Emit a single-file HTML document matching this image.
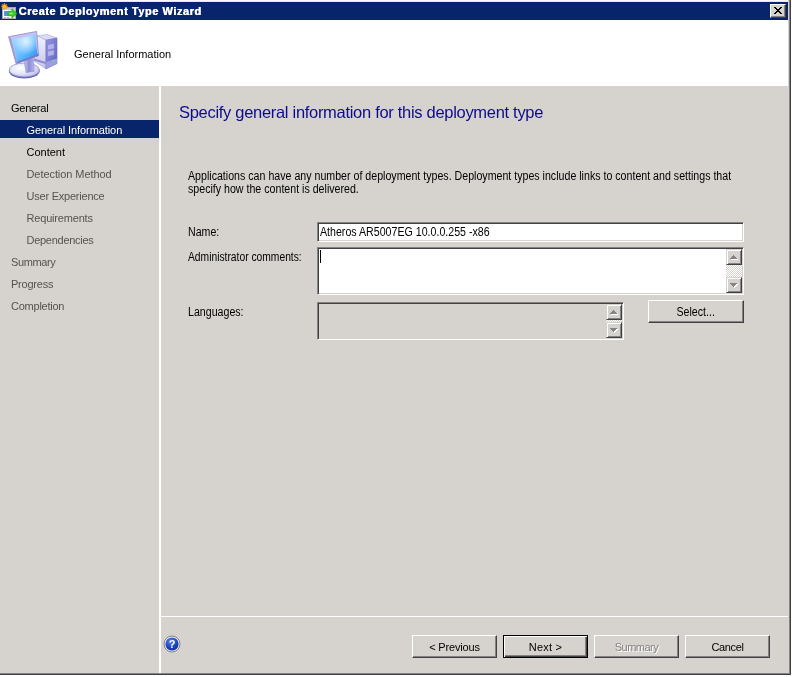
<!DOCTYPE html>
<html>
<head>
<meta charset="utf-8">
<title>Create Deployment Type Wizard</title>
<style>
*{box-sizing:border-box;margin:0;padding:0}
html,body{width:792px;height:677px;overflow:hidden;background:#fff}
body{will-change:transform;font-family:"Liberation Sans",sans-serif;font-size:11px;color:#000;position:relative}
.abs{position:absolute}
#win{left:0;top:0;width:789px;height:673px;background:#d6d3ce}
#topstrip{left:0;top:0;width:789px;height:2px;background:linear-gradient(#fcfbf8 0 1px,#ebe8e0 1px 2px)}
#title{left:0;top:2px;width:788px;height:18px;background:#08246b}
#title .t{left:18.5px;top:2px;color:#fff;font-weight:bold;font-size:11px;line-height:14px;white-space:nowrap;letter-spacing:0.55px;text-shadow:0.4px 0 0 #fff}
#close{left:770px;top:4px;width:16px;height:14px;background:#d6d3ce;border:1px solid;border-color:#fff #424142 #424142 #fff;box-shadow:inset -1px -1px 0 #848284}
#header{left:0;top:20px;width:788px;height:66px;background:#fff}
#header .t{left:74px;top:27px;font-size:11px;line-height:14px;white-space:nowrap}
#rb1{left:788px;top:0;width:1px;height:673px;background:#d6d3ce}
#rb2{left:789px;top:0;width:2px;height:675px;background:linear-gradient(90deg,#848284 0 1px,#424142 1px 2px)}
#bb{left:0;top:673px;width:790px;height:2px;background:linear-gradient(#848284 0 1px,#424142 1px 2px)}
#bbc{left:790px;top:673px;width:1px;height:2px;background:#424142}
#side{left:0;top:86px;width:159px;height:587px;background:#d6d3ce}
.nav{left:0;width:159px;height:18px;line-height:18px;font-size:11px;white-space:nowrap}
.nav.l1{padding-left:11px}
.nav.l2{padding-left:26.5px}
.nav.dis{color:#555350}
.nav.sel{background:#08246b;color:#fff;line-height:20px}
#vline{left:159px;top:86px;width:2px;height:587px;background:#fff}
#hline{left:161px;top:616px;width:627px;height:1px;background:#fff}
#h1{left:179px;top:102px;font-size:16.5px;line-height:20px;color:#0c0c8c;white-space:nowrap;letter-spacing:-0.3px}
.ms{font-size:12px;line-height:14px;white-space:nowrap;transform:scaleX(.886);transform-origin:0 0}
.sunken{border:1px solid;border-color:#848284 #fff #fff #848284;box-shadow:inset 1px 1px 0 #424142,inset -1px -1px 0 #d6d3ce}
.btn{height:23px;background:#d6d3ce;border:1px solid;border-color:#fff #424142 #424142 #fff;box-shadow:inset -1px -1px 0 #848284;font-size:11px;line-height:23px;text-align:center;white-space:nowrap}
.sb{width:16px;height:16px;background:#d6d3ce;border:1px solid;border-color:#d6d3ce #424142 #424142 #d6d3ce;box-shadow:inset 1px 1px 0 #fff,inset -1px -1px 0 #848284}
.track{width:16px;background:repeating-conic-gradient(#fff 0 25%,#d6d3ce 0 50%) 0 0/2px 2px}
</style>
</head>
<body>
<div id="win" class="abs"></div>
<div id="topstrip" class="abs"></div>
<div id="title" class="abs"><div class="t abs">Create Deployment Type Wizard</div></div>
<svg class="abs" style="left:0;top:0" width="20" height="22" viewBox="0 0 20 22">
<rect x="2.5" y="7.5" width="13" height="11" fill="#fff" stroke="#a8a8a8" stroke-width="1"/>
<rect x="3" y="8" width="12" height="2" fill="#c8ccd4"/>
<rect x="4" y="11" width="4.5" height="5" fill="#5a94d8"/>
<rect x="4" y="17" width="2" height="1" fill="#b4b8c4"/><rect x="7" y="17" width="2" height="1" fill="#b4b8c4"/>
<polygon points="8,11.3 12,11.3 12,8.8 17,13.5 12,18.2 12,15.7 8,15.7" fill="#3ccc2c" stroke="#22a818" stroke-width=".8" stroke-linejoin="round"/>
<polygon points="9.3,12.8 12.8,12.8 12.8,14.2 9.3,14.2" fill="#90ec80"/>
<path d="M4.40 3.09 L5.14 4.93 L6.79 4.19 L6.15 5.85 L7.90 6.49 L6.15 7.14 L6.79 8.79 L5.14 8.06 L4.40 9.71 L3.66 8.06 L2.01 8.79 L2.65 7.14 L1.09 6.49 L2.65 5.85 L2.01 4.19 L3.66 4.93 Z" fill="#f6a81c" stroke="#f0941a" stroke-width=".5"/>
<circle cx="4.4" cy="6.4" r="1.5" fill="#fcc040"/>
</svg>
<div id="close" class="abs"><svg class="abs" style="left:3px;top:2px" width="8" height="7" viewBox="0 0 8 7" shape-rendering="crispEdges" fill="#000"><rect x="0" y="0" width="2" height="1"/><rect x="6" y="0" width="2" height="1"/><rect x="1" y="1" width="2" height="1"/><rect x="5" y="1" width="2" height="1"/><rect x="2" y="2" width="4" height="1"/><rect x="3" y="3" width="2" height="1"/><rect x="2" y="4" width="4" height="1"/><rect x="1" y="5" width="2" height="1"/><rect x="5" y="5" width="2" height="1"/><rect x="0" y="6" width="2" height="1"/><rect x="6" y="6" width="2" height="1"/></svg></div>
<div id="header" class="abs"><div class="t abs">General Information</div></div>
<svg class="abs" style="left:2px;top:22px" width="64" height="64" viewBox="0 0 677 677">
<defs>
<linearGradient id="scr" x1="0" y1="0" x2="1" y2="1"><stop offset="0" stop-color="#a6dcff"/><stop offset=".45" stop-color="#74c4ff"/><stop offset="1" stop-color="#1e90f4"/></linearGradient>
<radialGradient id="scrh" cx=".55" cy=".25" r=".5"><stop offset="0" stop-color="#fff" stop-opacity=".75"/><stop offset="1" stop-color="#fff" stop-opacity="0"/></radialGradient>
<linearGradient id="lf" x1="0" y1="0" x2="0" y2="1"><stop offset="0" stop-color="#f2f2ff"/><stop offset="1" stop-color="#c4c4ea"/></linearGradient>
<linearGradient id="ff" x1="0" y1="0" x2="1" y2="1"><stop offset="0" stop-color="#9494e4"/><stop offset="1" stop-color="#6060c0"/></linearGradient>
<radialGradient id="bs" cx=".4" cy=".35" r=".7"><stop offset="0" stop-color="#fff"/><stop offset=".6" stop-color="#e4e4f6"/><stop offset="1" stop-color="#b4b4e0"/></radialGradient>
<linearGradient id="st" x1="0" y1="0" x2="1" y2="0"><stop offset="0" stop-color="#c8c8f2"/><stop offset=".5" stop-color="#8a8ad6"/><stop offset="1" stop-color="#b8b8ec"/></linearGradient>
</defs>
<ellipse cx="236" cy="519" rx="163" ry="79" fill="#6464b8"/>
<ellipse cx="236" cy="508" rx="160" ry="74" fill="url(#bs)" stroke="#8484cc" stroke-width="7"/>
<polygon points="372,146 478,132 582,170 465,192" fill="#dcdcf6" stroke="#a4a4dc" stroke-width="6"/>
<polygon points="372,146 465,192 465,496 338,412" fill="url(#lf)" stroke="#a4a4dc" stroke-width="6"/>
<polygon points="465,192 582,170 582,440 465,496" fill="url(#ff)" stroke="#6a6ac0" stroke-width="6"/>
<polygon points="340,386 465,424 465,446 340,408" fill="#8c8cd2"/>
<polygon points="465,424 582,386 582,440 465,496" fill="#9c9ce0"/>
<polygon points="482,240 552,226 552,282 482,296" fill="#b4b4ea" stroke="#7878c8" stroke-width="5"/>
<polygon points="482,308 552,294 552,350 482,364" fill="#b4b4ea" stroke="#7878c8" stroke-width="5"/>
<circle cx="545" cy="410" r="11" fill="#6ee66e"/>
<polygon points="232,408 332,384 342,520 256,538" fill="url(#st)" stroke="#8080cc" stroke-width="5"/>
<polygon points="70,156 366,100 386,356 150,442" fill="#c4c4ee" stroke="#8484cc" stroke-width="8" stroke-linejoin="round"/>
<polygon points="150,442 386,356 383,330 154,418" fill="#7676c6"/>
<polygon points="70,156 150,442 164,436 96,172" fill="#9c9cdc"/>
<polygon points="108,186 350,136 374,340 160,420" fill="url(#scr)"/>
<polygon points="108,186 350,136 374,340 160,420" fill="url(#scrh)"/>
</svg>
<div id="side" class="abs"></div>
<div class="nav l1 abs" style="top:99px;letter-spacing:-0.26px">General</div>
<div class="nav l2 sel abs" style="top:120px;letter-spacing:-0.08px">General Information</div>
<div class="nav l2 abs" style="top:143px;letter-spacing:0px">Content</div>
<div class="nav l2 dis abs" style="top:165px;letter-spacing:-0.07px">Detection Method</div>
<div class="nav l2 dis abs" style="top:187px;letter-spacing:-0.22px">User Experience</div>
<div class="nav l2 dis abs" style="top:209px;letter-spacing:-0.18px">Requirements</div>
<div class="nav l2 dis abs" style="top:231px;letter-spacing:-0.27px">Dependencies</div>
<div class="nav l1 dis abs" style="top:253px;letter-spacing:-0.39px">Summary</div>
<div class="nav l1 dis abs" style="top:275px;letter-spacing:-0.22px">Progress</div>
<div class="nav l1 dis abs" style="top:297px;letter-spacing:-0.24px">Completion</div>
<div id="vline" class="abs"></div>
<div id="hline" class="abs"></div>
<div id="h1" class="abs">Specify general information for this deployment type</div>
<div class="ms abs" style="left:188px;top:169px">Applications can have any number of deployment types. Deployment types include links to content and settings that</div>
<div class="ms abs" style="left:188px;top:182px">specify how the content is delivered.</div>
<div class="ms abs" style="left:188px;top:225px">Name:</div>
<div class="ms abs" style="left:188px;top:250px;transform:scaleX(.857)">Administrator comments:</div>
<div class="ms abs" style="left:188px;top:305px">Languages:</div>
<div class="sunken abs" style="left:317px;top:222px;width:427px;height:20px;background:#fff"><div class="ms abs" style="left:2px;top:2px">Atheros AR5007EG 10.0.0.255 -x86</div></div>
<div class="sunken abs" style="left:317px;top:247px;width:427px;height:48px;background:#fff">
 <div class="abs" style="left:2px;top:2px;width:1px;height:13px;background:#000"></div>
 <div class="sb abs" style="left:408px;top:1px"><svg class="abs" style="left:3px;top:5px" width="9" height="6" viewBox="0 0 9 6" shape-rendering="crispEdges"><g fill="#fff" transform="translate(1,1)"><rect x="3" y="0" width="1" height="1"/><rect x="2" y="1" width="3" height="1"/><rect x="1" y="2" width="5" height="1"/><rect x="0" y="3" width="7" height="1"/></g><g fill="#848284"><rect x="3" y="0" width="1" height="1"/><rect x="2" y="1" width="3" height="1"/><rect x="1" y="2" width="5" height="1"/><rect x="0" y="3" width="7" height="1"/></g></svg></div>
 <div class="track abs" style="left:408px;top:17px;height:12px"></div>
 <div class="sb abs" style="left:408px;top:29px"><svg class="abs" style="left:3px;top:5px" width="9" height="6" viewBox="0 0 9 6" shape-rendering="crispEdges"><g fill="#fff" transform="translate(1,1)"><rect x="0" y="0" width="7" height="1"/><rect x="1" y="1" width="5" height="1"/><rect x="2" y="2" width="3" height="1"/><rect x="3" y="3" width="1" height="1"/></g><g fill="#848284"><rect x="0" y="0" width="7" height="1"/><rect x="1" y="1" width="5" height="1"/><rect x="2" y="2" width="3" height="1"/><rect x="3" y="3" width="1" height="1"/></g></svg></div>
</div>
<div class="sunken abs" style="left:317px;top:302px;width:307px;height:38px;background:#d6d3ce">
 <div class="sb abs" style="left:288px;top:1px"><svg class="abs" style="left:3px;top:5px" width="9" height="6" viewBox="0 0 9 6" shape-rendering="crispEdges"><g fill="#fff" transform="translate(1,1)"><rect x="3" y="0" width="1" height="1"/><rect x="2" y="1" width="3" height="1"/><rect x="1" y="2" width="5" height="1"/><rect x="0" y="3" width="7" height="1"/></g><g fill="#848284"><rect x="3" y="0" width="1" height="1"/><rect x="2" y="1" width="3" height="1"/><rect x="1" y="2" width="5" height="1"/><rect x="0" y="3" width="7" height="1"/></g></svg></div>
 <div class="track abs" style="left:288px;top:17px;height:2px"></div>
 <div class="sb abs" style="left:288px;top:19px"><svg class="abs" style="left:3px;top:5px" width="9" height="6" viewBox="0 0 9 6" shape-rendering="crispEdges"><g fill="#fff" transform="translate(1,1)"><rect x="0" y="0" width="7" height="1"/><rect x="1" y="1" width="5" height="1"/><rect x="2" y="2" width="3" height="1"/><rect x="3" y="3" width="1" height="1"/></g><g fill="#848284"><rect x="0" y="0" width="7" height="1"/><rect x="1" y="1" width="5" height="1"/><rect x="2" y="2" width="3" height="1"/><rect x="3" y="3" width="1" height="1"/></g></svg></div>
</div>
<div class="btn abs" style="left:648px;top:300px;width:96px"><div class="ms" style="display:inline-block;transform-origin:50% 0;line-height:23px">Select...</div></div>
<div class="btn abs" style="left:412px;top:635px;width:85px;letter-spacing:-0.18px">&lt; Previous</div>
<div class="btn abs" style="left:503px;top:635px;width:85px;border-color:#000;box-shadow:inset 1px 1px 0 #fff,inset -1px -1px 0 #424142,inset -2px -2px 0 #848284;letter-spacing:0.25px">Next &gt;</div>
<div class="btn abs" style="left:594px;top:635px;width:85px;color:#848284;text-shadow:1px 1px 0 #fff;letter-spacing:-0.49px">Summary</div>
<div class="btn abs" style="left:685px;top:635px;width:85px;letter-spacing:-0.35px">Cancel</div>
<svg class="abs" style="left:163px;top:635px" width="18" height="18" viewBox="0 0 18 18">
<defs><radialGradient id="hg" cx=".4" cy=".3" r=".8"><stop offset="0" stop-color="#5a82e8"/><stop offset=".6" stop-color="#1c44c0"/><stop offset="1" stop-color="#0c2a90"/></radialGradient></defs>
<circle cx="9" cy="9" r="8" fill="#f0f0f4" stroke="#666a78" stroke-width=".8"/>
<circle cx="9" cy="9" r="6.6" fill="url(#hg)"/>
<text x="9" y="13" text-anchor="middle" font-family="Liberation Sans" font-weight="bold" font-size="11" fill="#fff">?</text>
</svg>
<div id="rb1" class="abs"></div>
<div id="rb2" class="abs"></div>
<div id="bb" class="abs"></div>
<div id="bbc" class="abs"></div>
</body>
</html>
